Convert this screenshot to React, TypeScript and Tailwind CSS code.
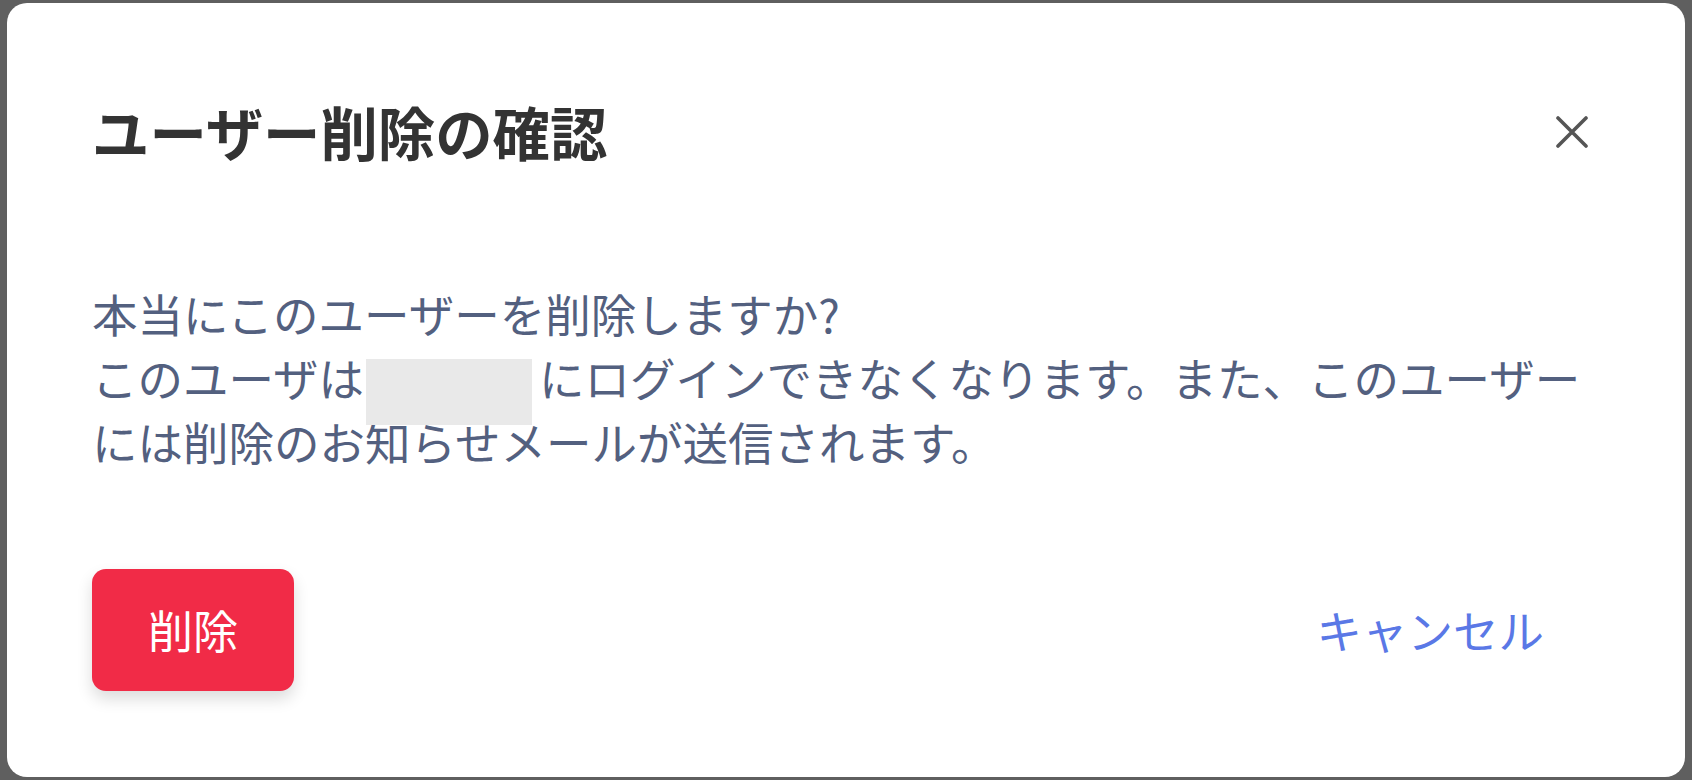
const CloseIcon = () => (
  <svg width="32" height="32" viewBox="0 0 32 32" fill="none" stroke="currentColor" strokeWidth="3.6" strokeLinecap="round">
    <path d="M2 2L30 30M30 2L2 30" />
  </svg>
);

const ConfirmDeleteDialog = () => {
  return (
    <div className="flex h-full flex-col rounded-[20px] bg-white px-[85px] pt-[89px] pb-[86px]">
      <div className="flex h-[80px] items-center justify-between">
        <h2 className="text-[57.4px] font-bold leading-none text-[#333333]">ユーザー削除の確認</h2>
        <button className="mr-[12px] flex h-[32px] w-[32px] items-center justify-center text-[#555555]">
          <CloseIcon />
        </button>
      </div>

      <p className="mt-[109px] pr-[4px] text-[45.5px] leading-[64px] text-[#53607f]">
        本当にこのユーザーを削除しますか?
        <br />
        このユーザは
        <span className="relative inline-block h-[64px] w-[175px] align-top">
          <span className="absolute left-[2px] top-[14px] h-[66px] w-[166px] bg-[#e9e9e9]"></span>
        </span>
        にログインできなくなります。また、このユーザーには削除のお知らせメールが送信されます。
      </p>

      <div className="mt-auto flex items-center justify-between">
        <button className="flex h-[122px] w-[202px] items-center justify-center rounded-[14px] bg-[#f12b47] text-[45px] text-white shadow-[0_8px_16px_rgba(0,0,0,0.14)]">
          削除
        </button>
        <button className="mr-[56px] text-[45.5px] leading-none text-[#5a78e6]">キャンセル</button>
      </div>
    </div>
  );
};

export default function App() {
  return (
    <div className="h-[780px] w-[1692px] bg-[#5f5f5f] px-[7px] py-[3px] font-['Noto_Sans_CJK_JP',sans-serif]">
      <ConfirmDeleteDialog />
    </div>
  );
}
